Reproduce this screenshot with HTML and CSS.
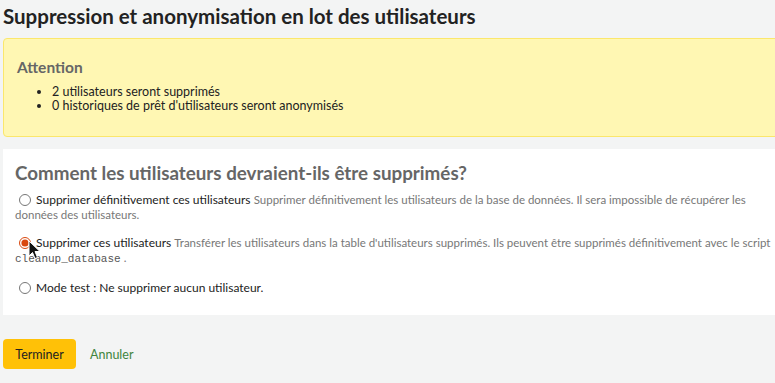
FILE: index.html
```html
<!DOCTYPE html>
<html lang="fr">
<head>
    <meta charset="UTF-8" />
    <title>Suppression et anonymisation en lot des utilisateurs</title>
    <link rel="stylesheet" href="styles.css">
</head>
<body>
    <main class="page">
        <h1>Suppression et anonymisation en lot des utilisateurs</h1>

        <div class="alert">
            <h3>Attention</h3>
            <ul>
                <li>2 utilisateurs seront supprimés</li>
                <li>0 historiques de prêt d'utilisateurs seront anonymisés</li>
            </ul>
        </div>

        <fieldset class="rows">
            <h3>Comment les utilisateurs devraient-ils être supprimés?</h3>
            <div class="choice">
                <input type="radio" name="op" id="op-perm" />
                <label for="op-perm">Supprimer définitivement ces utilisateurs</label>
                <span class="hint">Supprimer définitivement les utilisateurs de la base de données. Il sera impossible de récupérer les données des utilisateurs.</span>
            </div>
            <div class="choice">
                <input type="radio" name="op" id="op-trash" checked />
                <label for="op-trash">Supprimer ces utilisateurs</label>
                <span class="hint">Transférer les utilisateurs dans la table d'utilisateurs supprimés. Ils peuvent être supprimés définitivement avec le script <code>cleanup_database</code>.</span>
                <svg class="cursor" width="14" height="20" viewBox="0 0 14 20">
                    <path d="M1 1 L1 16 L4.5 12.5 L7 18.5 L9.5 17.5 L7 11.5 L12 11.5 Z" fill="#111" stroke="#fff" stroke-width="1" stroke-linejoin="round"/>
                </svg>
            </div>
            <div class="choice">
                <input type="radio" name="op" id="op-test" />
                <label for="op-test">Mode test : Ne supprimer aucun utilisateur.</label>
            </div>
        </fieldset>

        <div class="actions">
            <button type="button">Terminer</button>
            <a href="#">Annuler</a>
        </div>
    </main>
</body>
</html>
```

FILE: styles.css
```css
body {
    margin: 0;
    background: #f3f4f4;
    font-family: Lato, "Open Sans", sans-serif;
    font-size: 12.5px;
    color: #222;
    overflow: hidden;
}

.page {
    width: 800px;
    padding-left: 3px;
}

h1 {
    font-size: 20.5px;
    font-weight: bold;
    color: #222;
    margin: 0;
    padding: 5px 0 0;
    height: 33px;
    line-height: 22px;
}

.alert {
    background: #fff7b3;
    border: 1px solid #fbe76c;
    border-radius: 4px;
    padding: 17px 13px 20px;
    height: 60px;
}

.alert h3 {
    font-size: 15.5px;
    color: #666;
    margin: 0 0 7px;
    line-height: 22px;
}

.alert ul {
    margin: 0;
    padding-left: 35px;
}

.alert li {
    line-height: 14px;
}

fieldset.rows {
    margin: 12px 0 0;
    border: none;
    background: #fff;
    padding: 12px 12px 0;
    height: 166px;
    box-sizing: border-box;
}

fieldset.rows h3 {
    font-size: 18.8px;
    color: #666;
    margin: 0 0 7px;
    line-height: 24px;
}

.choice {
    position: relative;
    font-size: 12px;
    line-height: 15px;
    width: 759px;
    margin-bottom: 13px;
}

.choice input {
    margin: 0 2px 0 4px;
    width: 12px;
    height: 12px;
    vertical-align: -2px;
    accent-color: #d9480f;
}

.choice label {
    color: #222;
}

.hint {
    font-size: 11.5px;
    color: #777;
}

code {
    font-family: "Liberation Mono", "DejaVu Sans Mono", monospace;
    font-size: 11px;
    color: #555;
    margin-right: 3px;
}

.cursor {
    position: absolute;
    left: 13px;
    top: 5px;
}

.actions {
    display: flex;
    align-items: center;
    gap: 14px;
    margin-top: 24px;
}

button {
    background: #ffc107;
    border: none;
    border-radius: 4px;
    color: #222;
    font-family: inherit;
    font-size: 12.5px;
    width: 73px;
    height: 30px;
    padding: 0;
}

.actions a {
    color: #408540;
    text-decoration: none;
}
```
